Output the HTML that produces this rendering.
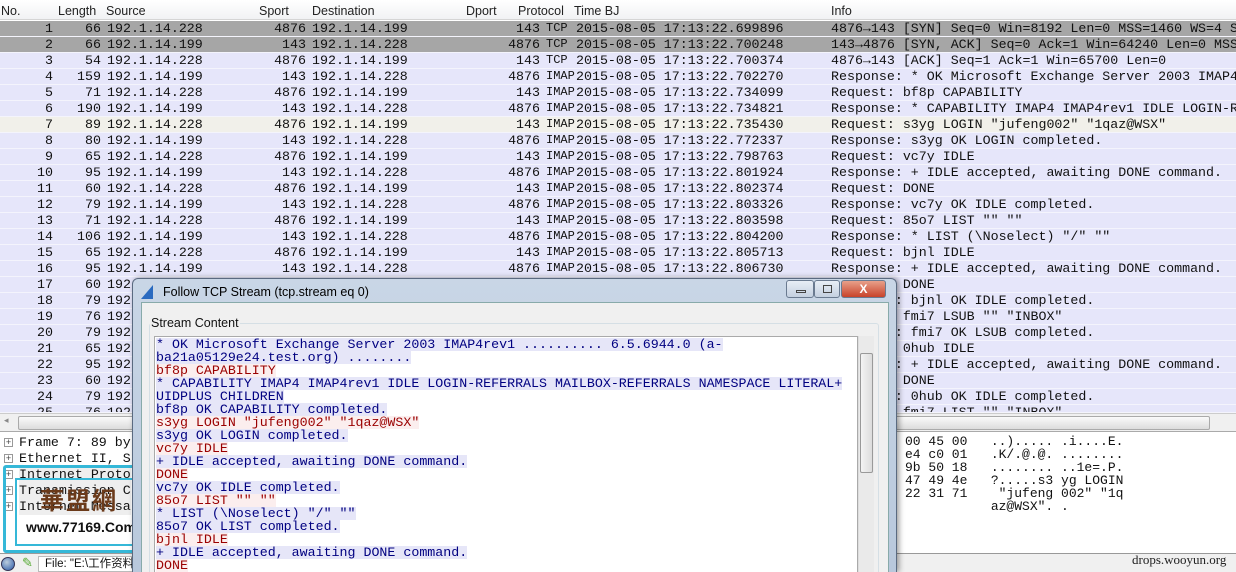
<!DOCTYPE html>
<html><head><meta charset="utf-8"><style>
*{margin:0;padding:0;box-sizing:border-box}
html{width:1236px;height:572px;overflow:hidden}
body{width:1236px;height:572px;overflow:hidden;background:#fff;position:relative;font-family:"Liberation Mono",monospace;font-size:13.3px;color:#111}
.hdr{position:absolute;left:0;top:0;width:1236px;height:20px;background:linear-gradient(#fff,#f1f2f4);border-bottom:1px solid #d5d5d5;font-family:"Liberation Sans",sans-serif;font-size:12.5px;color:#222}
.hdr span{position:absolute;top:4px}
.row{position:absolute;left:0;width:1236px;height:16px;background:#e6e6fa;border-bottom:1px solid #f4f4fc;white-space:pre;line-height:15px}
.row span{position:absolute;top:0}
.a{right:1183px}.b{right:1135px}.c{left:107px}.d{right:930px}.e{left:312px}.f{right:696px}.g{left:546px;font-size:12px}.h{left:576px}.i{left:831px}
.dlg{position:absolute;left:132px;top:278px;width:765px;height:294px;overflow:hidden;background:linear-gradient(#c9d6e6,#b8c8dc);border:1px solid #5a6a80;border-bottom:none;border-radius:6px 6px 0 0;box-shadow:2px 0 6px rgba(0,0,0,.4)}
.title{position:absolute;left:30px;top:6px;font-family:"Liberation Sans",sans-serif;font-size:12.5px;color:#000}
.client{position:absolute;left:8px;top:23px;width:748px;height:280px;background:#f0f0f0;border:1px solid #8aa}
.grp{position:absolute;left:7px;top:20px;width:730px;height:270px;border:1px solid #d5dfe5;border-radius:3px}
.glab{position:absolute;left:8px;top:13px;background:#f0f0f0;font-family:"Liberation Sans",sans-serif;font-size:12.5px;padding:0 1px}
.ta{position:absolute;left:12px;top:33px;width:704px;height:250px;background:#fff;border:1px solid #aaa;overflow:hidden}
.ln{position:absolute;left:1px;height:13px;line-height:13px;font-size:13.3px;white-space:pre}
.s{color:#000080;background:#e6e6f8}
.k{color:#9a0000;background:#fbeeee}
.sb{position:absolute;left:716px;top:33px;width:16px;height:250px;background:#eaeaea;border-left:1px solid #ddd}
.btn{position:absolute;top:1px;height:18px;border:1px solid #6a7a90;border-radius:3px;background:linear-gradient(#e8eef6,#c4d0e0)}
.pane{position:absolute;left:0;width:1236px}
.dl{position:absolute;left:19px;height:16px;line-height:16px;white-space:pre}
.pb{position:absolute;left:4px;width:9px;height:9px;border:1px solid #999;font-size:9px;line-height:7px;text-align:center;color:#444;font-family:"Liberation Sans"}
.hx{position:absolute;height:13px;line-height:13px;font-size:13px;white-space:pre}
</style></head><body>
<div class="hdr">
<span style="left:1px">No.</span><span style="left:58px">Length</span><span style="left:106px">Source</span><span style="left:259px">Sport</span><span style="left:312px">Destination</span><span style="left:466px">Dport</span><span style="left:518px">Protocol</span><span style="left:574px">Time BJ</span><span style="left:831px">Info</span>
</div>

<div class="row" style="top:21px;background:#a6a6a6"><span class="a">1</span><span class="b">66</span><span class="c">192.1.14.228</span><span class="d">4876</span><span class="e">192.1.14.199</span><span class="f">143</span><span class="g">TCP</span><span class="h">2015-08-05 17:13:22.699896</span><span class="i">4876→143 [SYN] Seq=0 Win=8192 Len=0 MSS=1460 WS=4 S</span></div>
<div class="row" style="top:37px;background:#a6a6a6"><span class="a">2</span><span class="b">66</span><span class="c">192.1.14.199</span><span class="d">143</span><span class="e">192.1.14.228</span><span class="f">4876</span><span class="g">TCP</span><span class="h">2015-08-05 17:13:22.700248</span><span class="i">143→4876 [SYN, ACK] Seq=0 Ack=1 Win=64240 Len=0 MSS</span></div>
<div class="row" style="top:53px"><span class="a">3</span><span class="b">54</span><span class="c">192.1.14.228</span><span class="d">4876</span><span class="e">192.1.14.199</span><span class="f">143</span><span class="g">TCP</span><span class="h">2015-08-05 17:13:22.700374</span><span class="i">4876→143 [ACK] Seq=1 Ack=1 Win=65700 Len=0</span></div>
<div class="row" style="top:69px"><span class="a">4</span><span class="b">159</span><span class="c">192.1.14.199</span><span class="d">143</span><span class="e">192.1.14.228</span><span class="f">4876</span><span class="g">IMAP</span><span class="h">2015-08-05 17:13:22.702270</span><span class="i">Response: * OK Microsoft Exchange Server 2003 IMAP4</span></div>
<div class="row" style="top:85px"><span class="a">5</span><span class="b">71</span><span class="c">192.1.14.228</span><span class="d">4876</span><span class="e">192.1.14.199</span><span class="f">143</span><span class="g">IMAP</span><span class="h">2015-08-05 17:13:22.734099</span><span class="i">Request: bf8p CAPABILITY</span></div>
<div class="row" style="top:101px"><span class="a">6</span><span class="b">190</span><span class="c">192.1.14.199</span><span class="d">143</span><span class="e">192.1.14.228</span><span class="f">4876</span><span class="g">IMAP</span><span class="h">2015-08-05 17:13:22.734821</span><span class="i">Response: * CAPABILITY IMAP4 IMAP4rev1 IDLE LOGIN-R</span></div>
<div class="row" style="top:117px;background:#f1f0ea"><span class="a">7</span><span class="b">89</span><span class="c">192.1.14.228</span><span class="d">4876</span><span class="e">192.1.14.199</span><span class="f">143</span><span class="g">IMAP</span><span class="h">2015-08-05 17:13:22.735430</span><span class="i">Request: s3yg LOGIN "jufeng002" "1qaz@WSX"</span></div>
<div class="row" style="top:133px"><span class="a">8</span><span class="b">80</span><span class="c">192.1.14.199</span><span class="d">143</span><span class="e">192.1.14.228</span><span class="f">4876</span><span class="g">IMAP</span><span class="h">2015-08-05 17:13:22.772337</span><span class="i">Response: s3yg OK LOGIN completed.</span></div>
<div class="row" style="top:149px"><span class="a">9</span><span class="b">65</span><span class="c">192.1.14.228</span><span class="d">4876</span><span class="e">192.1.14.199</span><span class="f">143</span><span class="g">IMAP</span><span class="h">2015-08-05 17:13:22.798763</span><span class="i">Request: vc7y IDLE</span></div>
<div class="row" style="top:165px"><span class="a">10</span><span class="b">95</span><span class="c">192.1.14.199</span><span class="d">143</span><span class="e">192.1.14.228</span><span class="f">4876</span><span class="g">IMAP</span><span class="h">2015-08-05 17:13:22.801924</span><span class="i">Response: + IDLE accepted, awaiting DONE command.</span></div>
<div class="row" style="top:181px"><span class="a">11</span><span class="b">60</span><span class="c">192.1.14.228</span><span class="d">4876</span><span class="e">192.1.14.199</span><span class="f">143</span><span class="g">IMAP</span><span class="h">2015-08-05 17:13:22.802374</span><span class="i">Request: DONE</span></div>
<div class="row" style="top:197px"><span class="a">12</span><span class="b">79</span><span class="c">192.1.14.199</span><span class="d">143</span><span class="e">192.1.14.228</span><span class="f">4876</span><span class="g">IMAP</span><span class="h">2015-08-05 17:13:22.803326</span><span class="i">Response: vc7y OK IDLE completed.</span></div>
<div class="row" style="top:213px"><span class="a">13</span><span class="b">71</span><span class="c">192.1.14.228</span><span class="d">4876</span><span class="e">192.1.14.199</span><span class="f">143</span><span class="g">IMAP</span><span class="h">2015-08-05 17:13:22.803598</span><span class="i">Request: 85o7 LIST "" ""</span></div>
<div class="row" style="top:229px"><span class="a">14</span><span class="b">106</span><span class="c">192.1.14.199</span><span class="d">143</span><span class="e">192.1.14.228</span><span class="f">4876</span><span class="g">IMAP</span><span class="h">2015-08-05 17:13:22.804200</span><span class="i">Response: * LIST (\Noselect) "/" ""</span></div>
<div class="row" style="top:245px"><span class="a">15</span><span class="b">65</span><span class="c">192.1.14.228</span><span class="d">4876</span><span class="e">192.1.14.199</span><span class="f">143</span><span class="g">IMAP</span><span class="h">2015-08-05 17:13:22.805713</span><span class="i">Request: bjnl IDLE</span></div>
<div class="row" style="top:261px"><span class="a">16</span><span class="b">95</span><span class="c">192.1.14.199</span><span class="d">143</span><span class="e">192.1.14.228</span><span class="f">4876</span><span class="g">IMAP</span><span class="h">2015-08-05 17:13:22.806730</span><span class="i">Response: + IDLE accepted, awaiting DONE command.</span></div>
<div class="row" style="top:277px"><span class="a">17</span><span class="b">60</span><span class="c">192.1.14.228</span><span class="i">Request: DONE</span></div>
<div class="row" style="top:293px"><span class="a">18</span><span class="b">79</span><span class="c">192.1.14.199</span><span class="i">Response: bjnl OK IDLE completed.</span></div>
<div class="row" style="top:309px"><span class="a">19</span><span class="b">76</span><span class="c">192.1.14.228</span><span class="i">Request: fmi7 LSUB "" "INBOX"</span></div>
<div class="row" style="top:325px"><span class="a">20</span><span class="b">79</span><span class="c">192.1.14.199</span><span class="i">Response: fmi7 OK LSUB completed.</span></div>
<div class="row" style="top:341px"><span class="a">21</span><span class="b">65</span><span class="c">192.1.14.228</span><span class="i">Request: 0hub IDLE</span></div>
<div class="row" style="top:357px"><span class="a">22</span><span class="b">95</span><span class="c">192.1.14.199</span><span class="i">Response: + IDLE accepted, awaiting DONE command.</span></div>
<div class="row" style="top:373px"><span class="a">23</span><span class="b">60</span><span class="c">192.1.14.228</span><span class="i">Request: DONE</span></div>
<div class="row" style="top:389px"><span class="a">24</span><span class="b">79</span><span class="c">192.1.14.199</span><span class="i">Response: 0hub OK IDLE completed.</span></div>
<div class="row" style="top:405px;height:8px;overflow:hidden"><span class="a">25</span><span class="b">76</span><span class="c">192.1.14.228</span><span class="i">Request: fmi7 LIST "" "INBOX"</span></div>

<div class="pane" style="top:413px;height:19px;background:#f0f0f0;border-top:1px solid #ccc;border-bottom:1px solid #aaa"><div style="position:absolute;left:18px;top:2px;width:1192px;height:14px;background:linear-gradient(#fafafa,#dcdcdc);border:1px solid #aaa;border-radius:2px"></div><div style="position:absolute;left:4px;top:2px;font-size:9px;color:#888">◂</div></div>
<div class="pane" style="top:432px;height:121px;background:#fff"></div>
<div class="dl" style="top:435px">Frame 7: 89 by</div><div class="pb" style="top:438px">+</div>
<div class="dl" style="top:451px">Ethernet II, S</div><div class="pb" style="top:454px">+</div>
<div class="dl" style="top:467px;background:#eee">Internet Proto</div><div class="pb" style="top:470px">+</div>
<div class="dl" style="top:483px;background:#eee">Transmission C</div><div class="pb" style="top:486px">+</div>
<div class="dl" style="top:499px;background:#eee">Internet Messa</div><div class="pb" style="top:502px">+</div>
<div class="hx" style="left:905px;top:435px">00 45 00   ..)..... .i....E.</div>
<div class="hx" style="left:905px;top:448px">e4 c0 01   .K/.@.@. ........</div>
<div class="hx" style="left:905px;top:461px">9b 50 18   ........ ..1e=.P.</div>
<div class="hx" style="left:905px;top:474px">47 49 4e   ?.....s3 yg LOGIN</div>
<div class="hx" style="left:905px;top:487px">22 31 71    "jufeng 002" "1q</div>
<div class="hx" style="left:905px;top:500px">           az@WSX". .</div>
<div class="pane" style="top:553px;height:19px;background:#f0f0f0;border-top:1px solid #999"></div>
<div style="position:absolute;left:1px;top:557px;width:14px;height:14px;border-radius:50%;background:radial-gradient(circle at 40% 35%,#bcd,#2a5aa8);border:1px solid #335"></div>
<div style="position:absolute;left:22px;top:556px;color:#5a3;font-size:13px">✎</div>
<div style="position:absolute;left:38px;top:556px;width:100px;height:16px;border:1px solid #bbb;background:#fff;font-family:'Liberation Sans','Noto Sans CJK SC',sans-serif;font-size:11.5px;padding-left:6px;line-height:15px;white-space:nowrap;overflow:hidden">File: "E:\工作资料</div>
<div style="position:absolute;left:1132px;top:552px;font-family:'Liberation Serif',serif;font-size:13px;color:#222">drops.wooyun.org</div>

<div style="position:absolute;left:3px;top:465px;width:160px;height:88px;border:3px solid #35b8d8;border-radius:3px"></div>
<div style="position:absolute;left:15px;top:478px;width:140px;height:68px;border:2px solid #35b8d8"></div>
<div style="position:absolute;left:40px;top:485px;font-family:'Noto Sans CJK SC',sans-serif;font-weight:bold;font-size:24px;line-height:28px;color:#6b3a1a;letter-spacing:2px">華盟網</div>
<div style="position:absolute;left:22px;top:518px;width:130px;height:22px;background:#fff"></div>
<div style="position:absolute;left:26px;top:519px;font-family:'Liberation Sans',sans-serif;font-weight:bold;font-size:14px;color:#111">www.77169.Com</div>

<div class="dlg">
<div style="position:absolute;left:8px;top:6px;width:0;height:0;border-left:12px solid transparent;border-bottom:14px solid #2a6ac0"></div>
<div class="title">Follow TCP Stream (tcp.stream eq 0)</div>
<div class="btn" style="left:653px;width:28px"><div style="position:absolute;left:9px;top:9px;width:10px;height:3px;border:1px solid #444"></div></div>
<div class="btn" style="left:681px;width:26px"><div style="position:absolute;left:8px;top:4px;width:9px;height:8px;border:1px solid #444"></div></div>
<div class="btn" style="left:708px;width:45px;background:linear-gradient(#e8a08a,#c8432a);color:#fff;font-family:'Liberation Sans';font-weight:bold;font-size:12px;text-align:center;line-height:16px">X</div>
<div class="client">
<div class="grp"></div><div class="glab">Stream Content</div>
<div class="ta">
<div class="ln s" style="top:1px">* OK Microsoft Exchange Server 2003 IMAP4rev1 .......... 6.5.6944.0 (a-</div>
<div class="ln s" style="top:14px">ba21a05129e24.test.org) ........</div>
<div class="ln k" style="top:27px">bf8p CAPABILITY</div>
<div class="ln s" style="top:40px">* CAPABILITY IMAP4 IMAP4rev1 IDLE LOGIN-REFERRALS MAILBOX-REFERRALS NAMESPACE LITERAL+</div>
<div class="ln s" style="top:53px">UIDPLUS CHILDREN</div>
<div class="ln s" style="top:66px">bf8p OK CAPABILITY completed.</div>
<div class="ln k" style="top:79px">s3yg LOGIN "jufeng002" "1qaz@WSX"</div>
<div class="ln s" style="top:92px">s3yg OK LOGIN completed.</div>
<div class="ln k" style="top:105px">vc7y IDLE</div>
<div class="ln s" style="top:118px">+ IDLE accepted, awaiting DONE command.</div>
<div class="ln k" style="top:131px">DONE</div>
<div class="ln s" style="top:144px">vc7y OK IDLE completed.</div>
<div class="ln k" style="top:157px">85o7 LIST "" ""</div>
<div class="ln s" style="top:170px">* LIST (\Noselect) "/" ""</div>
<div class="ln s" style="top:183px">85o7 OK LIST completed.</div>
<div class="ln k" style="top:196px">bjnl IDLE</div>
<div class="ln s" style="top:209px">+ IDLE accepted, awaiting DONE command.</div>
<div class="ln k" style="top:222px">DONE</div>
<div class="ln s" style="top:235px">bjnl OK IDLE completed.</div>
</div>
<div class="sb"><div style="position:absolute;left:1px;top:17px;width:13px;height:120px;background:linear-gradient(90deg,#f4f4f4,#dcdcdc);border:1px solid #999;border-radius:2px"></div></div>
</div>
</div>
</body></html>
